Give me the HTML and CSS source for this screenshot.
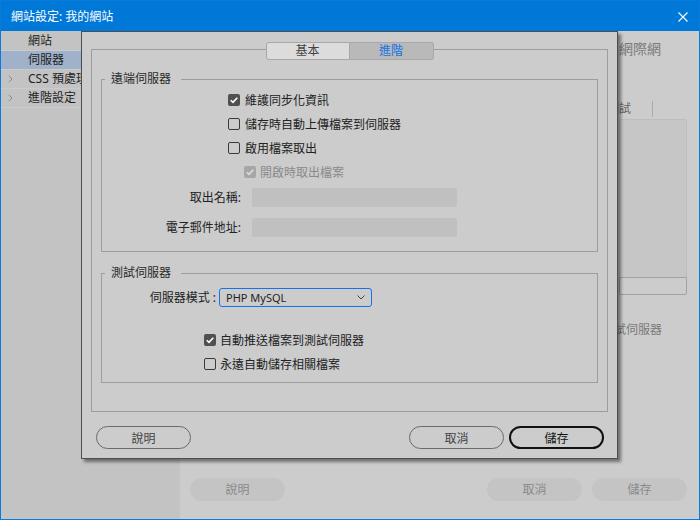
FILE: index.html
```html
<!DOCTYPE html>
<html lang="zh-Hant">
<head>
    <meta charset="UTF-8">
    <meta name="viewport" content="width=device-width, initial-scale=1.0">
    <title>網站設定</title>
    <link rel="stylesheet" href="styles.css">
</head>
<body>
    <div class="window">
        <div class="title-bar">
            <span class="title-text">網站設定: 我的網站</span>
            <svg class="close-icon" width="10" height="10" viewBox="0 0 10 10">
                <path d="M0.5 0.5L9.5 9.5M9.5 0.5L0.5 9.5" stroke="#fff" stroke-width="1.1" fill="none"/>
            </svg>
        </div>

        <div class="window-body">
            <!-- Categorias à esquerda -->
            <div class="sidebar">
                <div class="side-item"><span class="side-icon"></span>網站</div>
                <div class="side-item selected"><span class="side-icon"></span>伺服器</div>
                <div class="side-item">
                    <span class="side-icon"><svg width="5" height="8" viewBox="0 0 5 8"><polyline points="0.8,0.8 4,4 0.8,7.2" fill="none" stroke="#8a8a8a" stroke-width="1"/></svg></span>CSS 預處理器
                </div>
                <div class="side-item">
                    <span class="side-icon"><svg width="5" height="8" viewBox="0 0 5 8"><polyline points="0.8,0.8 4,4 0.8,7.2" fill="none" stroke="#8a8a8a" stroke-width="1"/></svg></span>進階設定
                </div>
            </div>

            <!-- Página de servidores (atrás do diálogo) -->
            <div class="main">
                <div class="main-body">
                    <div class="bg-side">
                        <div class="bg-heading">網際網</div>
                        <div class="bg-col-head"><span>測試</span></div>
                        <div class="bg-list"></div>
                        <div class="bg-list-bar"></div>
                        <div class="bg-label"><span>測試伺服器</span></div>
                    </div>
                </div>
                <div class="bg-buttons">
                    <div class="bg-btn">說明</div>
                    <div class="bg-btn-group">
                        <div class="bg-btn">取消</div>
                        <div class="bg-btn">儲存</div>
                    </div>
                </div>
            </div>
        </div>

        <!-- Diálogo do servidor -->
        <div class="dialog">
            <div class="tabs">
                <div class="tab tab-basic">基本</div>
                <div class="tab tab-active">進階</div>
            </div>
            <div class="panel">
                <fieldset class="group group-remote">
                    <legend>遠端伺服器</legend>
                    <div class="check-row">
                        <span class="cb checked"><svg width="12" height="12" viewBox="0 0 12 12"><polyline points="2.8,6.2 5,8.4 9.3,3.7" fill="none" stroke="#fff" stroke-width="1.6"/></svg></span>
                        <span>維護同步化資訊</span>
                    </div>
                    <div class="check-row">
                        <span class="cb"></span>
                        <span>儲存時自動上傳檔案到伺服器</span>
                    </div>
                    <div class="check-row">
                        <span class="cb"></span>
                        <span>啟用檔案取出</span>
                    </div>
                    <div class="check-row sub disabled">
                        <span class="cb checked"><svg width="12" height="12" viewBox="0 0 12 12"><polyline points="2.8,6.2 5,8.4 9.3,3.7" fill="none" stroke="#dedede" stroke-width="1.6"/></svg></span>
                        <span>開啟時取出檔案</span>
                    </div>
                    <div class="field-row first">
                        <label>取出名稱:</label>
                        <input type="text" disabled>
                    </div>
                    <div class="field-row">
                        <label>電子郵件地址:</label>
                        <input type="text" disabled>
                    </div>
                </fieldset>

                <fieldset class="group group-test">
                    <legend>測試伺服器</legend>
                    <div class="mode-row">
                        <label>伺服器模式 :</label>
                        <div class="select">
                            <span>PHP MySQL</span>
                            <svg width="8" height="5" viewBox="0 0 8 5"><polyline points="0.5,0.5 4,4 7.5,0.5" fill="none" stroke="#444" stroke-width="1"/></svg>
                        </div>
                    </div>
                    <div class="check-row test-first">
                        <span class="cb checked"><svg width="12" height="12" viewBox="0 0 12 12"><polyline points="2.8,6.2 5,8.4 9.3,3.7" fill="none" stroke="#fff" stroke-width="1.6"/></svg></span>
                        <span>自動推送檔案到測試伺服器</span>
                    </div>
                    <div class="check-row">
                        <span class="cb"></span>
                        <span>永遠自動儲存相關檔案</span>
                    </div>
                </fieldset>
            </div>
            <div class="dialog-buttons">
                <button class="btn">說明</button>
                <div class="btn-group">
                    <button class="btn">取消</button>
                    <button class="btn btn-primary">儲存</button>
                </div>
            </div>
        </div>
    </div>
</body>
</html>
```

FILE: styles.css
```css
body {
    margin: 0;
    padding: 0;
    font-family: "Noto Sans", "Noto Sans CJK TC", sans-serif;
    font-size: 12px;
    color: #222;
    background-color: #cccccc;
}

.window {
    position: relative;
    width: 700px;
    height: 520px;
    box-sizing: border-box;
    border: 1px solid #0a7bd8;
    display: flex;
    flex-direction: column;
    background-color: #cccccc;
}

.title-bar {
    height: 30px;
    flex-shrink: 0;
    background-color: #0078d7;
    color: #fff;
    display: flex;
    align-items: center;
    justify-content: space-between;
    padding: 0 11px 0 10px;
}

.title-text {
    line-height: 16px;
    margin-top: 1px;
}

.close-icon {
    margin-top: 2px;
}

.window-body {
    flex: 1;
    display: flex;
}

/* Lista lateral */
.sidebar {
    width: 179px;
    flex-shrink: 0;
    background-color: #c3c3c3;
    padding-top: 1px;
}

.side-item {
    height: 18px;
    line-height: 18px;
    border-bottom: 1px solid #cbcbcb;
    display: flex;
    align-items: center;
    white-space: nowrap;
    color: #1e1e1e;
}

.side-item.selected {
    background-color: #a0b1ca;
}

.side-icon {
    width: 27px;
    flex-shrink: 0;
    display: flex;
    align-items: center;
    padding-left: 7px;
    box-sizing: border-box;
}

/* Área principal (fundo) */
.main {
    flex: 1;
    display: flex;
    flex-direction: column;
    padding: 0 12px 18px 10px;
}

.main-body {
    flex: 1;
    display: flex;
    justify-content: flex-end;
}

.bg-side {
    width: 68px;
    display: flex;
    flex-direction: column;
    color: #7a7a7a;
    white-space: nowrap;
}

.bg-heading {
    margin-top: 10px;
    font-size: 14px;
    line-height: 16px;
}

.bg-col-head {
    margin-top: 44px;
    width: 33px;
    height: 16px;
    line-height: 16px;
    border-right: 1px solid #ababab;
    color: #666;
}

.bg-col-head span {
    margin-left: -12px;
}

.bg-list {
    margin-top: 2px;
    height: 158px;
    box-sizing: border-box;
    background-color: #c6c6c6;
    border: 1px solid #bdbdbd;
    border-bottom: none;
    border-radius: 2px 2px 0 0;
}

.bg-list-bar {
    height: 18px;
    box-sizing: border-box;
    border: 1px solid #a2a2a2;
    border-radius: 0 0 2px 2px;
}

.bg-label {
    margin-top: 27px;
    line-height: 16px;
}

.bg-label span {
    margin-left: -17px;
}

.bg-buttons {
    display: flex;
    justify-content: space-between;
}

.bg-btn-group {
    display: flex;
    gap: 10px;
}

.bg-btn {
    width: 95px;
    height: 23px;
    line-height: 23px;
    text-align: center;
    border-radius: 12px;
    background-color: #c4c4c4;
    color: #8a8a8a;
}

/* Diálogo */
.dialog {
    position: absolute;
    left: 80px;
    top: 30px;
    width: 537px;
    height: 428px;
    box-sizing: border-box;
    border: 1px solid #4d4d4d;
    background-color: #cccccc;
    box-shadow: 3px 3px 3px rgba(0, 0, 0, 0.45);
    padding: 10px 9px 9px;
    display: flex;
    flex-direction: column;
}

.tabs {
    display: flex;
    align-self: center;
    margin-bottom: -11px;
    position: relative;
    z-index: 1;
}

.tab {
    width: 84px;
    height: 18px;
    box-sizing: border-box;
    line-height: 16px;
    text-align: center;
    border: 1px solid #a8a8a8;
}

.tab-basic {
    background-color: #dcdcdc;
    color: #444;
    border-radius: 3px 0 0 3px;
}

.tab-active {
    background-color: #b9b9b9;
    color: #1473e6;
    border-left: none;
    border-radius: 0 3px 3px 0;
}

.panel {
    flex: 1;
    border: 1px solid #9d9d9d;
    padding: 0 9px;
}

.group {
    margin: 0;
    padding: 1px 0 14px;
    border: 1px solid #9d9d9d;
    min-width: 0;
}

.group legend {
    margin-left: 3px;
    padding: 0 10px 0 6px;
    line-height: 16px;
    color: #2a2a2a;
}

.group-remote {
    margin-top: 21px;
}

.group-test {
    margin-top: 13px;
    padding-bottom: 6px;
}

.check-row {
    height: 24px;
    display: flex;
    align-items: center;
    gap: 5px;
    padding-left: 126px;
    white-space: nowrap;
}

.check-row.sub {
    padding-left: 142px;
    gap: 4px;
}

.check-row.disabled {
    color: #8a8a8a;
}

.group-test .check-row {
    padding-left: 102px;
    gap: 4px;
}

.check-row.test-first {
    margin-top: 21px;
}

.cb {
    width: 12px;
    height: 12px;
    box-sizing: border-box;
    border: 1px solid #3a3a3a;
    border-radius: 2px;
    flex-shrink: 0;
    display: flex;
}

.cb.checked {
    border: none;
    background-color: #505050;
}

.check-row.disabled .cb.checked {
    background-color: #a6a6a6;
}

.field-row {
    display: grid;
    grid-template-columns: 139px 205px;
    column-gap: 11px;
    align-items: center;
    margin-top: 11px;
}

.field-row.first {
    margin-top: 4px;
}

.field-row label,
.mode-row label {
    text-align: right;
    white-space: nowrap;
    line-height: 16px;
}

.field-row input {
    height: 19px;
    box-sizing: border-box;
    border: none;
    border-radius: 2px;
    background-color: #c0c0c0;
    padding: 0;
    margin: 0;
}

.mode-row {
    display: grid;
    grid-template-columns: 114px 153px;
    column-gap: 3px;
    align-items: center;
    margin-top: 6px;
}

.select {
    height: 19px;
    box-sizing: border-box;
    border: 1px solid #1473e6;
    border-radius: 3px;
    display: flex;
    align-items: center;
    justify-content: space-between;
    padding: 0 6px 0 6px;
    font-size: 11px;
    color: #1e1e1e;
}

.dialog-buttons {
    margin-top: 14px;
    padding: 0 4px 0 5px;
    display: flex;
    justify-content: space-between;
}

.btn-group {
    display: flex;
    gap: 5px;
}

.btn {
    width: 95px;
    height: 23px;
    box-sizing: border-box;
    padding: 0;
    border: 1px solid #6a6a6a;
    border-radius: 12px;
    background: transparent;
    font-family: inherit;
    font-size: 12px;
    color: #444;
    cursor: pointer;
}

.btn-primary {
    border: 2px solid #111;
    color: #111;
}
```
